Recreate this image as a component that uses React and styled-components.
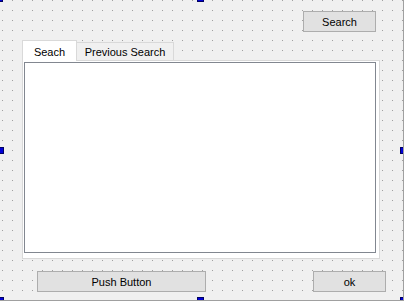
import styled, { createGlobalStyle } from "styled-components";

const GlobalStyle = createGlobalStyle`
  html, body {
    margin: 0;
    padding: 0;
    background: #f0f0f0;
    overflow: hidden;
  }
  body {
    font-family: "Liberation Sans", Arial, sans-serif;
    font-size: 11px;
    color: #000;
  }
`;

const Canvas = styled.div`
  position: relative;
  width: 404px;
  height: 301px;
  box-sizing: border-box;
  border-right: 1px solid #a0a0a0;
  border-bottom: 1px solid #a0a0a0;
  background: #f0f0f0;
  overflow: hidden;
  display: flex;
  flex-direction: column;

  /* designer grid dots */
  &::before {
    content: "";
    position: absolute;
    inset: 0;
    background-image: linear-gradient(to right, #a0a0a0 1px, transparent 1px);
    background-size: 10px 10px;
    background-position: 2px 0;
    -webkit-mask-image: linear-gradient(to bottom, #000 1px, transparent 1px);
    mask-image: linear-gradient(to bottom, #000 1px, transparent 1px);
    -webkit-mask-size: 10px 10px;
    mask-size: 10px 10px;
    pointer-events: none;
  }
`;

const TopRow = styled.div`
  position: relative;
  display: flex;
  justify-content: flex-end;
  padding: 11px 27px 0 0;
`;

const Button = styled.button`
  box-sizing: border-box;
  width: ${(p) => p.$w || 73}px;
  height: 21px;
  margin: 0;
  padding: 1px 0 0;
  border: 1px solid #adadad;
  background: #e1e1e1;
  font-family: inherit;
  font-size: 11px;
  color: #000;
  display: flex;
  align-items: center;
  justify-content: center;
`;

const TabWidget = styled.div`
  position: relative;
  margin: 8px 0 0 22px;
  width: 358px;
  display: flex;
  flex-direction: column;
`;

const TabBar = styled.div`
  display: flex;
  align-items: flex-end;
  height: 20px;
`;

const Tab = styled.div`
  position: relative;
  box-sizing: border-box;
  border: 1px solid #d9d9d9;
  border-bottom: none;
  text-align: center;
  line-height: 16px;
  white-space: nowrap;
  ${(p) =>
    p.$active
      ? `
    z-index: 1;
    width: 55px;
    height: 21px;
    margin-bottom: -1px;
    padding-top: 3px;
    background: #fff;
  `
      : `
    width: 97px;
    height: 18px;
    padding-top: 1px;
    border-left: none;
    background: #f0f0f0;
  `}
`;

const Pane = styled.div`
  box-sizing: border-box;
  height: 199px;
  border: 1px solid #d9d9d9;
  background: #fff;
  padding: 1px 3px 5px 1px;
  display: flex;
`;

const ListBox = styled.div`
  flex: 1;
  border: 1px solid #828790;
  background: #fff;
`;

const BottomRow = styled.div`
  position: relative;
  display: flex;
  padding: 12px 0 0 37px;
  gap: 107px;
`;

const Handle = styled.div`
  position: absolute;
  box-sizing: border-box;
  width: 7px;
  height: 7px;
  left: ${(p) => p.$x}px;
  top: ${(p) => p.$y}px;
  background: #0000d8;
  border: 1px solid #000060;
  z-index: 2;
`;

const handles = [
  [-4, -5],
  [197, -5],
  [-3, 147],
  [400, 147],
  [-3, 297],
  [197, 297],
  [400, 297],
];

export default function App() {
  return (
    <>
      <GlobalStyle />
      <Canvas>
        <TopRow>
          <Button>Search</Button>
        </TopRow>
        <TabWidget>
          <TabBar>
            <Tab $active>Seach</Tab>
            <Tab>Previous Search</Tab>
          </TabBar>
          <Pane>
            <ListBox />
          </Pane>
        </TabWidget>
        <BottomRow>
          <Button $w={169}>Push Button</Button>
          <Button>ok</Button>
        </BottomRow>
        {handles.map(([x, y], i) => (
          <Handle key={i} $x={x} $y={y} />
        ))}
      </Canvas>
    </>
  );
}
